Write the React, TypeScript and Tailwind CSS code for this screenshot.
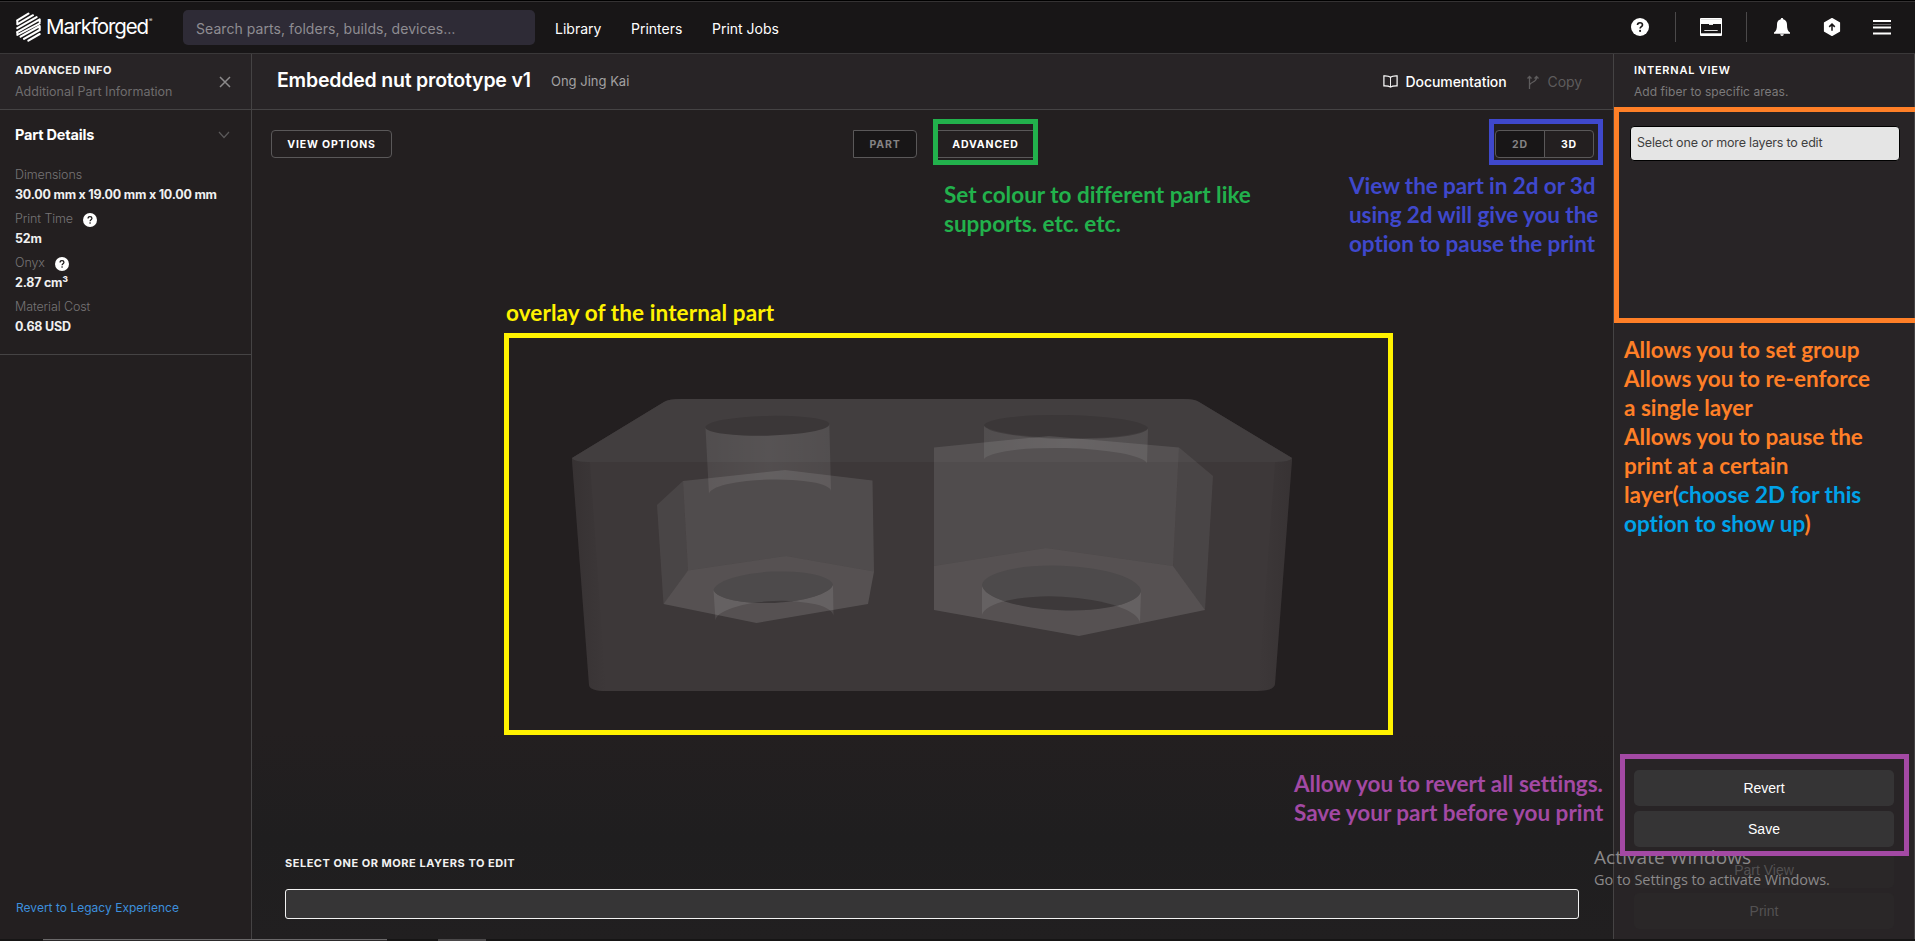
import React from "react";

const inter = "font-['Inter','Liberation_Sans',sans-serif]";
const note = "absolute whitespace-nowrap font-['Lato',sans-serif] text-[22.5px] font-bold leading-[29px] [font-variant-ligatures:none]";

function Logo() {
  return (
    <div className="flex w-[168px] items-center pl-4">
      <svg className="shrink-0" width="25" height="30" viewBox="0 0 25 30" fill="none" stroke="#fff" strokeWidth="2.1">
        <g strokeLinejoin="round" strokeLinecap="round">
          <path d="M1.3 8.3 12.4 1.6" />
          <path d="M1.3 12.3 17 3.2 M1.3 12.3V9" strokeWidth="2" />
          <path d="M1.3 16.2 20.6 5.2" />
          <path d="M1.3 20.1 23.7 7.4V10" />
          <path d="M1.3 20.1V23L23.7 11.4" strokeWidth="1.9" />
          <path d="M4.6 24.7 23.7 14V17" />
          <path d="M8 26.8 23.7 18" />
          <path d="M12.4 28.6 23.7 22" />
        </g>
      </svg>
      <span className="ml-[5px] text-[20.5px] leading-[30px] tracking-[-1.1px] text-white">Markforged</span>
      <span className="-mt-3 ml-px text-[5px] text-white">®</span>
    </div>
  );
}

function Help({ size }: { size: number }) {
  return (
    <svg width={size} height={size} viewBox="0 0 18 18">
      <circle cx="9" cy="9" r="9" fill="#fff" />
      <path d="M6.5 7.1C6.5 5.6 7.5 4.7 9 4.7s2.5.9 2.5 2.2c0 1.7-2.4 1.8-2.4 3.7" fill="none" stroke="#181617" strokeWidth="1.6" />
      <circle cx="9.1" cy="12.9" r="1.05" fill="#181617" />
    </svg>
  );
}

function HeaderIcons() {
  return (
    <div className="ml-auto mt-px flex h-full items-center pr-6">
      <Help size={18} />
      <div className="ml-[26px] h-[30px] w-px bg-[#4b494a]" />
      <svg className="ml-6" width="22" height="18" viewBox="0 0 22 18">
        <rect width="22" height="18" rx="1" fill="#fff" />
        <path d="M1 1.5h20" stroke="#ccc" strokeWidth="0.6" />
        <rect x="1" y="6" width="20" height="9.3" fill="#181617" />
        <path d="M9 6.4h4" stroke="#fff" strokeWidth="1" />
        <path d="M4.3 12.5h13.4" stroke="#ddd" strokeWidth="1" />
      </svg>
      <div className="ml-6 h-[30px] w-px bg-[#4b494a]" />
      <svg className="ml-[27px]" width="16" height="18" viewBox="0 0 16 18" fill="#fff">
        <path d="M8 0c.8 0 1.2.5 1.2 1.3C11.9 2 13 4 13 6.5c0 4 .6 6.5 3 8v1.300H0v-1.300c2.400-1.500 3-4 3-8C3 4 4.100 2 6.800 1.300 6.800.5 7.200 0 8 0zM6.200 16.300h3.600C9.600 17.500 9 18 8 18s-1.600-.5-1.800-1.700z" />
      </svg>
      <svg className="ml-[33px]" width="18" height="18" viewBox="0 0 18 18">
        <path d="M9 0.700 16.400 4.800V13.200L9 17.300 1.600 13.200V4.800Z" fill="#fff" stroke="#fff" strokeWidth="1.400" strokeLinejoin="round" />
        <path d="M9 12.800V6.500M6.200 8.900 9 6.100l2.800 2.800" fill="none" stroke="#181617" strokeWidth="1.500" />
      </svg>
      <svg className="ml-8" width="18" height="15" viewBox="0 0 18 15">
        <path d="M0 1h18M0 7.500h18M0 13.500h18" stroke="#fff" strokeWidth="2" />
        <path d="M0 4.500h18" stroke="#6a6869" strokeWidth="1" />
      </svg>
    </div>
  );
}

function Header() {
  return (
    <header className="flex h-[54px] shrink-0 items-center border-b border-[#3a3839] bg-[#181617] shadow-[inset_0_1px_0_#000,inset_0_2px_0_#343233]">
      <Logo />
      <div className="ml-[15px] mt-[2px] flex h-[35px] w-[352px] items-center rounded-[5px] bg-[#2e2b36] pl-[13px] pt-px text-[14px] tracking-[0.06px] text-[#8f8d92]">
        Search parts, folders, builds, devices…
      </div>
      <nav className="mt-[3px] flex text-[14px] text-white">
        <a className="ml-5 w-[76px]">Library</a>
        <a className="w-[81px]">Printers</a>
        <a>Print Jobs</a>
      </nav>
      <HeaderIcons />
    </header>
  );
}

function Detail({ label, value, help }: { label: string; value: string; help?: boolean }) {
  return (
    <div className="mb-[6px]">
      <div className="flex h-[19px] items-center gap-[10px] text-[12.500px] font-light tracking-[-0.1px] text-[#767475]">
        {label}
        {help && <Help size={14} />}
      </div>
      <div className="h-[19px] text-[12.500px] font-bold leading-[19px] tracking-[-0.220px] text-[#f0f0f0]">{value}</div>
    </div>
  );
}

function LeftPanel() {
  return (
    <aside className="flex w-[252px] shrink-0 flex-col border-r border-[#454344] bg-[#231f20]">
      <div className="flex h-14 items-center border-b border-[#454344] bg-[#282426] pl-[15px]">
        <div className="-mt-[2px] flex-1">
          <div className="h-[22px] text-[11px] font-bold leading-[22px] tracking-[0.420px] text-[#f2f2f2]">ADVANCED INFO</div>
          <div className="h-[22px] text-[12.500px] leading-[22px] text-[#6f6d6e]">Additional Part Information</div>
        </div>
        <svg className="mr-5" width="12" height="12" viewBox="0 0 12 12" stroke="#8c8a8b" strokeWidth="1.500">
          <path d="M1 1l10 10M11 1L1 11" />
        </svg>
      </div>
      <div className="h-[245px] border-b border-[#454344] pl-[15px] pt-[14px]">
        <div className="mb-[31px] flex h-[22px] items-center justify-between">
          <span className="-mt-px text-[14.500px] font-bold tracking-[-0.200px] text-white">Part Details</span>
          <svg className="mr-[21px]" width="12" height="8" viewBox="0 0 12 8" fill="none" stroke="#5b595a" strokeWidth="1.200">
            <path d="M1 1l5 5.500L11 1" />
          </svg>
        </div>
        <div className="-mt-[11px]">
          <Detail label="Dimensions" value="30.00 mm x 19.00 mm x 10.00 mm" />
          <Detail label="Print Time" value="52m" help />
          <Detail label="Onyx" value="2.87 cm³" help />
          <Detail label="Material Cost" value="0.68 USD" />
        </div>
      </div>
      <a className="mb-[22px] mt-auto pl-4 text-[12px] leading-[18px] tracking-[0.020px] text-[#3d8fdd]">Revert to Legacy Experience</a>
    </aside>
  );
}

function PartScene() {
  return (
    <svg className="block" width="879" height="392" viewBox="509 338 879 392">
      <defs>
        <linearGradient id="edgeL" x1="0" x2="1">
          <stop offset="0" stopColor="#231f20" stopOpacity="0.250" />
          <stop offset="1" stopColor="#231f20" stopOpacity="0" />
        </linearGradient>
        <linearGradient id="edgeR" x1="1" x2="0">
          <stop offset="0" stopColor="#231f20" stopOpacity="0.220" />
          <stop offset="1" stopColor="#231f20" stopOpacity="0" />
        </linearGradient>
        <linearGradient id="wall" x1="0" x2="1">
          <stop offset="0" stopColor="#fff" stopOpacity="0.080" />
          <stop offset="0.500" stopColor="#fff" stopOpacity="0.110" />
          <stop offset="1" stopColor="#fff" stopOpacity="0.085" />
        </linearGradient>
        <clipPath id="holeL"><path d="M713.500 590A60 17 -2.600 0 1 833 584.500A60 17 -2.600 0 1 713.500 590Z" /></clipPath>
        <clipPath id="holeR"><path d="M982 585A79.600 23 2.200 0 1 1141 591A79.600 23 2.200 0 1 982 585Z" /></clipPath>
      </defs>
      <path d="M572 458L664 402Q668 399 682 399H1183Q1195 399 1199 402L1292 458V460L1275 684Q1274 691 1257 691H606Q590 691 589 685L572 460Z" fill="#3d3839" />
      <path d="M572 458L664 402Q668 399 682 399H1183Q1195 399 1199 402L1292 458Q1290 462 1276 462H588Q574 462 572 458Z" fill="#423e3f" />
      <path d="M572 458Q574 462 590 462L606 691Q590 691 589 685Z" fill="url(#edgeL)" />
      <path d="M1292 458Q1290 462 1275 462L1258 691Q1274 691 1275 684Z" fill="url(#edgeR)" />

      <path d="M705.500 427.500L709 494A61 13 -1.400 0 1 831 491L829.300 424.300Z" fill="url(#wall)" />
      <path d="M705.300 427.300A62 9.900 -1.400 0 1 829.300 424.300A62 9.900 -1.400 0 1 705.300 427.300Z" fill="#3b3738" />
      <path d="M657 505L683 481L688 570.500L663.500 604Z" fill="#fff" fillOpacity="0.068" />
      <path d="M683 481L785 470L872.500 480.500L874 571.500L786 556L688 570.500Z" fill="#fff" fillOpacity="0.100" />
      <path d="M688 570.500L786 556L874 571.500L868 604L756.500 623L663.500 604Z" fill="#fff" fillOpacity="0.130" />
      <path d="M713.500 590A60 17 -2.600 0 0 833 584.500L833.500 616A59 17.500 -2.400 0 0 715.500 621Z" fill="#fff" fillOpacity="0.095" />
      <path d="M713.500 590A60 17 -2.600 0 1 833 584.500A60 17 -2.600 0 1 713.500 590Z" fill="#4d4a4b" />
      <path clipPath="url(#holeL)" d="M715.500 621A59 17.500 -2.400 0 1 833.500 616V640H715Z" fill="#3d393a" />

      <path d="M984 425L984 459A82 14.500 1.400 0 1 1147 463L1148 428A82 12.500 1 0 1 984 425Z" fill="url(#wall)" />
      <path d="M984 425A82.200 12.300 1 0 1 1148 428A82.200 12.300 1 0 1 984 425Z" fill="#3b3738" />
      <path d="M934 447.500L1049 436L1179 447.500L1173 566L1046 548L934 566Z" fill="#fff" fillOpacity="0.100" />
      <path d="M1179 447.500L1213 476L1205 610L1173 566Z" fill="#fff" fillOpacity="0.068" />
      <path d="M934 566L1046 548L1173 566L1205 610L1079 636L934 610Z" fill="#fff" fillOpacity="0.130" />
      <path d="M982 585A79.600 23 2.200 0 0 1141 591L1140 623A79.200 23.500 2.800 0 0 982 615Z" fill="#fff" fillOpacity="0.095" />
      <path d="M982 585A79.600 23 2.200 0 1 1141 591A79.600 23 2.200 0 1 982 585Z" fill="#4d4a4b" />
      <path clipPath="url(#holeR)" d="M982 615A79.200 23.500 2.800 0 1 1140 623V650H982Z" fill="#3d393a" />
    </svg>
  );
}

const toggle = "flex h-7 items-center justify-center border border-[#5a5859] text-[10.5px] font-bold tracking-[0.85px] pt-px";

function Viewer() {
  return (
    <main className="flex min-w-0 flex-1 flex-col">
      <div className="flex h-14 shrink-0 items-center border-b border-[#454344] bg-[#282426] pl-[25px] pr-[31px]">
        <h1 className="-mt-px w-[274px] whitespace-nowrap text-[19.500px] font-semibold tracking-[-0.200px] text-white">Embedded nut prototype v1</h1>
        <span className="text-[13px] text-[#a3a1a2]">Ong Jing Kai</span>
        <div className="ml-auto flex items-center text-[14px] font-medium tracking-[-0.080px] text-white">
          <svg width="15" height="13" viewBox="0 0 15 13" fill="none" stroke="#fff" strokeWidth="1.200">
            <path d="M7.500 2.200C6 .9 3.500.7.900.8V10.800c2.600-.1 5.100.1 6.600 1.300C9 10.900 11.500 10.700 14.100 10.800V.8C11.500.7 9 .9 7.500 2.200Z" />
            <path d="M7.500 2.200V12" strokeWidth="0.900" />
          </svg>
          <span className="ml-[8px] w-[121px]">Documentation</span>
          <svg width="12" height="14" viewBox="0 0 12 14" fill="none" stroke="#5e5c5d" strokeWidth="1.300">
            <path d="M2.500 14V1.500M.5 3.500l2-2 2 2M2.500 10.500C2.500 7 9.500 7.500 9.500 3V1.500M7.500 3.500l2-2 2 2" />
          </svg>
          <span className="ml-[9px] font-normal text-[#5e5c5d]">Copy</span>
        </div>
      </div>
      <section className="flex flex-1 flex-col bg-[linear-gradient(#231f20_0,#231f20_75%,#1f1e1f_88%,#211f20_100%)]">
        <div className="flex pl-[19px] pr-[19px] pt-5">
          <button className={`${toggle} w-[121px] rounded-[4px] text-white`}>VIEW OPTIONS</button>
          <button className={`${toggle} ml-[461px] w-16 rounded-r-[4px] bg-[#181617] text-[#858384]`}>PART</button>
          <button className={`${toggle} ml-5 w-[97px] text-white`}>ADVANCED</button>
          <div className="ml-auto flex">
            <button className={`${toggle} w-[50px] rounded-l-[4px] bg-[#181617] text-[#858384]`}>2D</button>
            <button className={`${toggle} -ml-px w-[50px] rounded-r-[4px] text-white`}>3D</button>
          </div>
        </div>
        <div className="mb-5 ml-[33px] mr-[34px] mt-auto">
          <div className="mb-[17px] text-[11px] font-bold leading-[18px] tracking-[0.520px] text-[#f2f2f2]">SELECT ONE OR MORE LAYERS TO EDIT</div>
          <div className="h-[30px] rounded-[3px] border border-[#f2f2f2] bg-[#363536]" />
        </div>
      </section>
    </main>
  );
}

const action = "flex h-9 items-center justify-center rounded-[5px] font-['Liberation_Sans',sans-serif] text-[14px]";

function RightPanel() {
  return (
    <aside className="flex w-[302px] shrink-0 flex-col border-x border-[#454344] bg-[#282426]">
      <div className="h-[72px] pl-5 pt-[5px]">
        <div className="h-[22px] text-[11px] font-semibold leading-[22px] tracking-[0.760px] text-white">INTERNAL VIEW</div>
        <div className="text-[12px] leading-[22px] tracking-[0.050px] text-[#7c7a7b]">Add fiber to specific areas.</div>
      </div>
      <div className="ml-4 flex h-[35px] w-[270px] items-center rounded-[4px] border border-black bg-[#e5e5e5] pb-px pl-[6px] text-[12.500px] tracking-[-0.180px] text-[#3f3f3f]">
        Select one or more layers to edit
      </div>
      <div className="mb-[10px] ml-5 mr-5 mt-auto flex flex-col gap-[5px]">
        <button className={`${action} bg-[#353435] text-white`}>Revert</button>
        <button className={`${action} bg-[#353435] text-white`}>Save</button>
        <button className={`${action} bg-[#2a2728] text-[#535152]`}>Part View</button>
        <button className={`${action} bg-[#2a2728] text-[#535152]`}>Print</button>
      </div>
    </aside>
  );
}

function Annotations() {
  return (
    <>
      <div className="absolute left-[504px] top-[333px] h-[402px] w-[889px] border-[5px] border-[#fff200]"><PartScene /></div>
      <div className={`${note} left-[506px] top-[298px] tracking-[0.100px] text-[#fff200]`}>overlay of the internal part</div>

      <div className="absolute left-[933px] top-[119px] h-[46px] w-[105px] border-[5px] border-[#22b14c]" />
      <div className={`${note} left-[944px] top-[180px] text-[#22b14c]`}>Set colour to different part like<br />supports. etc. etc.</div>

      <div className="absolute left-[1489px] top-[119px] h-[46px] w-[114px] border-[5px] border-[#3f48cc]" />
      <div className={`${note} left-[1349px] top-[171px] tracking-[-0.080px] text-[#3f48cc]`}>View the part in 2d or 3d<br />using 2d will give you the<br />option to pause the print</div>

      <div className="absolute left-[1614px] top-[107px] h-[216px] w-[301px] border-y-[5px] border-l-[5px] border-[#ff7f27]" />
      <div className={`${note} left-[1624px] top-[335px] text-[#ff7f27]`}>
        Allows you to set group<br />Allows you to re-enforce<br />a single layer<br />Allows you to pause the<br />print at a certain<br />
        layer(<span className="text-[#00a2e8]">choose 2D for this<br />option to show up</span>)
      </div>

      <div className="absolute left-[1594px] top-[843px] whitespace-nowrap font-['Open_Sans',sans-serif] text-[#8b898a]">
        <div className="text-[19px] leading-[28px] tracking-[0.080px]">Activate Windows</div>
        <div className="text-[14.500px] leading-[17px] tracking-[-0.050px]">Go to Settings to activate Windows.</div>
      </div>
      <div className="absolute left-[1620px] top-[754px] h-[102px] w-[289px] border-[5px] border-[#a349a4]" />
      <div className={`${note} left-[1294px] top-[769px] text-[#a349a4]`}>Allow you to revert all settings.<br />Save your part before you print</div>
    </>
  );
}

export default function App() {
  return (
    <div className={`relative flex h-[941px] w-[1915px] flex-col overflow-hidden bg-[#231f20] ${inter}`}>
      <Header />
      <div className="flex min-h-0 flex-1">
        <LeftPanel />
        <Viewer />
        <RightPanel />
      </div>
      <footer className="flex h-[2px] shrink-0 bg-[#161515]">
        <div className="ml-[43px] h-[2px] w-[344px] border-t border-[#6a6869] bg-[#2c2a2b]" />
        <div className="ml-[51px] h-[2px] w-12 bg-[#4a4849]" />
      </footer>
      <Annotations />
    </div>
  );
}
